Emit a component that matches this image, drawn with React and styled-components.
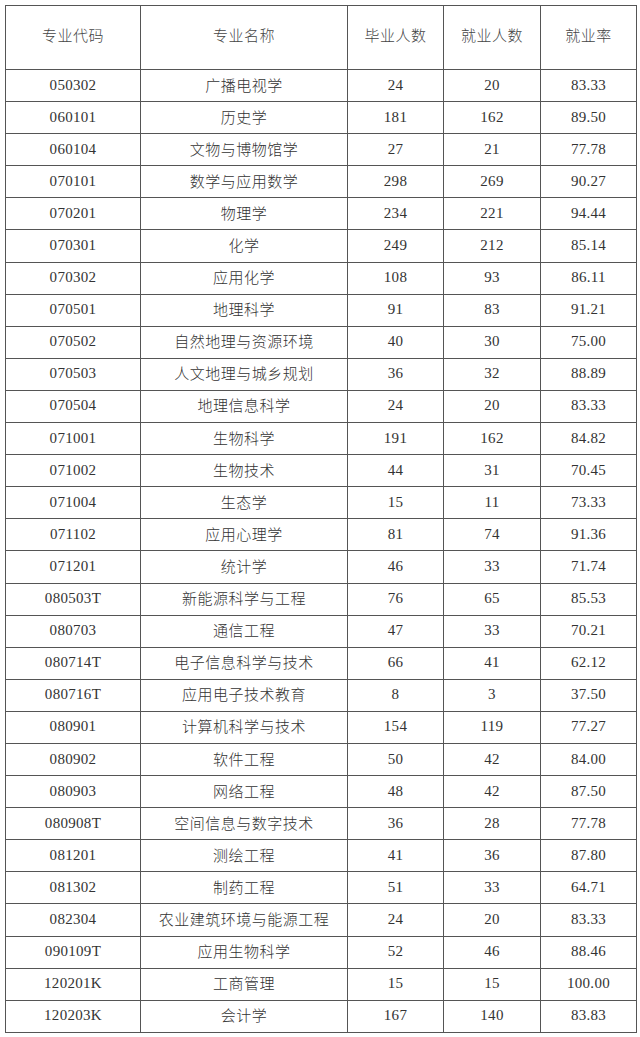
import React from "react";
import styled, { createGlobalStyle } from "styled-components";

const GlobalStyle = createGlobalStyle`
  html, body {
    margin: 0;
    padding: 0;
    background: #fff;
  }
`;

const headers = ["专业代码", "专业名称", "毕业人数", "就业人数", "就业率"];

const rows = [
  ["050302", "广播电视学", "24", "20", "83.33"],
  ["060101", "历史学", "181", "162", "89.50"],
  ["060104", "文物与博物馆学", "27", "21", "77.78"],
  ["070101", "数学与应用数学", "298", "269", "90.27"],
  ["070201", "物理学", "234", "221", "94.44"],
  ["070301", "化学", "249", "212", "85.14"],
  ["070302", "应用化学", "108", "93", "86.11"],
  ["070501", "地理科学", "91", "83", "91.21"],
  ["070502", "自然地理与资源环境", "40", "30", "75.00"],
  ["070503", "人文地理与城乡规划", "36", "32", "88.89"],
  ["070504", "地理信息科学", "24", "20", "83.33"],
  ["071001", "生物科学", "191", "162", "84.82"],
  ["071002", "生物技术", "44", "31", "70.45"],
  ["071004", "生态学", "15", "11", "73.33"],
  ["071102", "应用心理学", "81", "74", "91.36"],
  ["071201", "统计学", "46", "33", "71.74"],
  ["080503T", "新能源科学与工程", "76", "65", "85.53"],
  ["080703", "通信工程", "47", "33", "70.21"],
  ["080714T", "电子信息科学与技术", "66", "41", "62.12"],
  ["080716T", "应用电子技术教育", "8", "3", "37.50"],
  ["080901", "计算机科学与技术", "154", "119", "77.27"],
  ["080902", "软件工程", "50", "42", "84.00"],
  ["080903", "网络工程", "48", "42", "87.50"],
  ["080908T", "空间信息与数字技术", "36", "28", "77.78"],
  ["081201", "测绘工程", "41", "36", "87.80"],
  ["081302", "制药工程", "51", "33", "64.71"],
  ["082304", "农业建筑环境与能源工程", "24", "20", "83.33"],
  ["090109T", "应用生物科学", "52", "46", "88.46"],
  ["120201K", "工商管理", "15", "15", "100.00"],
  ["120203K", "会计学", "167", "140", "83.83"],
];

const colWidths = [135, 207, 96, 97, 96];

const Page = styled.div`
  padding: 5px 0 0 5px;
`;

const Table = styled.table`
  border-collapse: collapse;
  table-layout: fixed;
  width: 632px;
  color: #333;
  font-size: 15px;
`;

const HeadCell = styled.th`
  height: 57px;
  padding: 0 0 6px;
  border: 1px solid #555;
  text-align: center;
  vertical-align: middle;
  font-family: "Noto Sans CJK SC", sans-serif;
  font-size: 15px;
  font-weight: 300;
  letter-spacing: 0.5px;
  color: #444;
`;

const Cell = styled.td`
  height: ${(p) => (p.$cjk ? "28.1px" : "30.1px")};
  padding: 0 0 ${(p) => (p.$cjk ? "3px" : "1px")};
  border: 1px solid #555;
  text-align: center;
  vertical-align: middle;
  line-height: 1;
  font-family: ${(p) =>
    p.$cjk ? `"Noto Sans CJK SC", sans-serif` : `"Liberation Serif", serif`};
  font-weight: ${(p) => (p.$cjk ? 300 : 400)};
  letter-spacing: ${(p) => (p.$cjk ? "0.5px" : "0.3px")};
`;

export default function App() {
  return (
    <>
      <GlobalStyle />
      <Page>
        <Table>
          <colgroup>
            {colWidths.map((w, i) => (
              <col key={i} style={{ width: w }} />
            ))}
          </colgroup>
          <thead>
            <tr>
              {headers.map((h) => (
                <HeadCell key={h}>{h}</HeadCell>
              ))}
            </tr>
          </thead>
          <tbody>
            {rows.map((r) => (
              <tr key={r[0]}>
                {r.map((v, i) => (
                  <Cell key={i} $cjk={i === 1}>
                    {v}
                  </Cell>
                ))}
              </tr>
            ))}
          </tbody>
        </Table>
      </Page>
    </>
  );
}
